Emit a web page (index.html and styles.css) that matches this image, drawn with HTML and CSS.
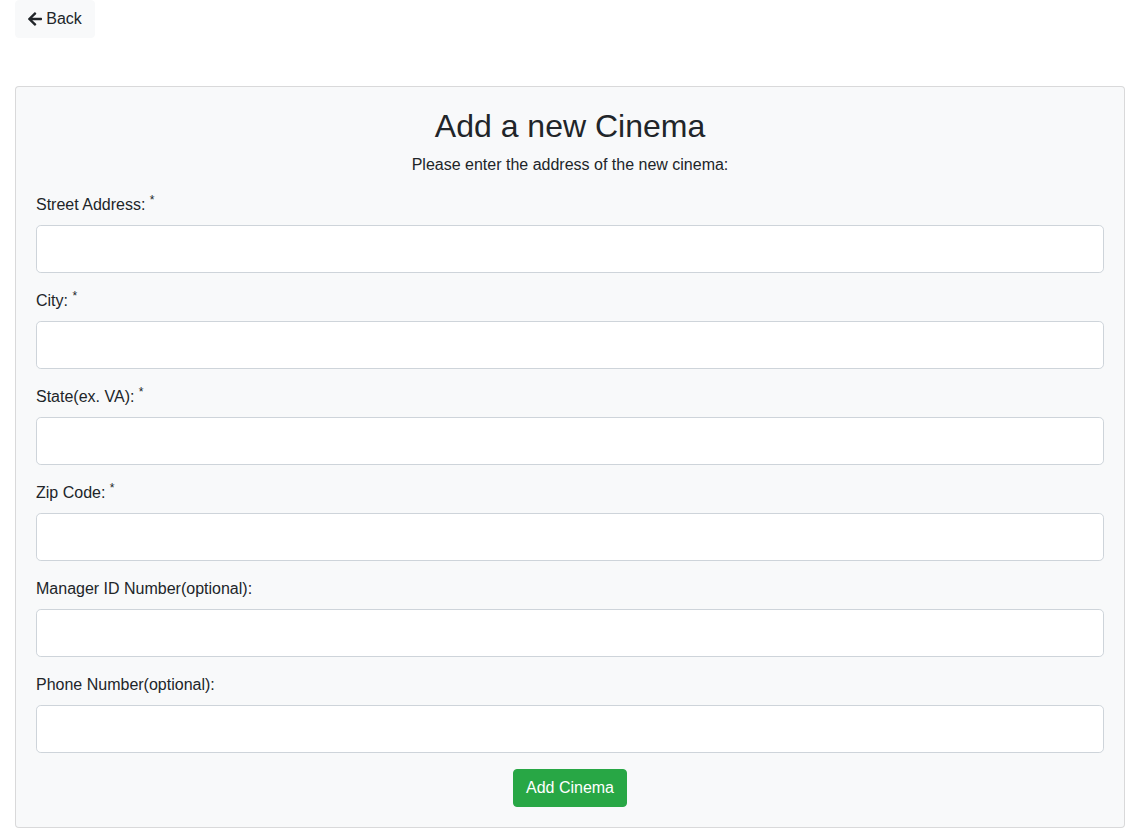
FILE: index.html
```html
<!DOCTYPE html>
<html>
<head>
<meta charset="utf-8">
<link rel="stylesheet" href="styles.css">
</head>
<body>
<div class="page">
  <div class="topbar">
    <button class="btn-back"><svg class="arrow" viewBox="0 0 448 512" width="14" height="16"><path fill="#212529" d="M257.5 445.1l-22.2 22.2c-9.4 9.4-24.6 9.4-33.9 0L7 273c-9.4-9.4-9.4-24.6 0-33.9L201.4 44.7c9.4-9.4 24.6-9.4 33.9 0l22.2 22.2c9.5 9.5 9.3 25-.4 34.3L136.6 216H424c13.3 0 24 10.7 24 24v32c0 13.3-10.7 24-24 24H136.6l120.5 114.8c9.8 9.3 10 24.8.4 34.3z"/></svg> Back</button>
  </div>
  <div class="card">
    <h2 class="title">Add a new Cinema</h2>
    <p class="subtitle">Please enter the address of the new cinema:</p>
    <form class="form">
      <div class="group">
        <label class="label">Street Address: <sup>*</sup></label>
        <input class="input" type="text">
      </div>
      <div class="group">
        <label class="label">City: <sup>*</sup></label>
        <input class="input" type="text">
      </div>
      <div class="group">
        <label class="label">State(ex. VA): <sup>*</sup></label>
        <input class="input" type="text">
      </div>
      <div class="group">
        <label class="label">Zip Code: <sup>*</sup></label>
        <input class="input" type="text">
      </div>
      <div class="group">
        <label class="label">Manager ID Number(optional):</label>
        <input class="input" type="text">
      </div>
      <div class="group">
        <label class="label">Phone Number(optional):</label>
        <input class="input" type="text">
      </div>
      <div class="actions">
        <button class="btn-submit" type="button">Add Cinema</button>
      </div>
    </form>
  </div>
</div>
</body>
</html>
```

FILE: styles.css
```css
* { box-sizing: border-box; }
html, body { margin: 0; padding: 0; }
body {
  font-family: "Liberation Sans", Arial, sans-serif;
  font-size: 16px;
  line-height: 1.5;
  color: #212529;
  background: #fff;
}
.page { padding: 0 15px; }
.topbar { height: 86px; }
.btn-back {
  display: inline-flex;
  align-items: center;
  gap: 4px;
  height: 38px;
  width: 80px;
  justify-content: center;
  padding: 0 12px;
  font: inherit;
  color: #212529;
  background: #f8f9fa;
  border: 1px solid #f8f9fa;
  border-radius: 4px;
}
.arrow { display: block; }
.card {
  background: #f8f9fa;
  border: 1px solid rgba(0,0,0,.125);
  border-radius: 4px;
  padding: 20px;
}
.title {
  margin: 0 0 8px;
  font-size: 32px;
  font-weight: 400;
  line-height: 1.2;
  text-align: center;
}
.subtitle {
  margin: 0 0 16px;
  text-align: center;
}
.form { margin: 0; }
.group { margin-bottom: 16px; }
.label {
  display: block;
  margin-bottom: 8px;
}
.label sup {
  font-size: 75%;
  line-height: 0;
  position: relative;
  top: -0.5em;
  vertical-align: baseline;
}
.input {
  display: block;
  width: 100%;
  height: 48px;
  padding: 8px 16px;
  font: inherit;
  font-size: 20px;
  background: #fff;
  border: 1px solid #ced4da;
  border-radius: 4.8px;
}
.actions { text-align: center; }
.btn-submit {
  height: 38px;
  padding: 0 12px;
  font: inherit;
  color: #fff;
  background: #28a745;
  border: 1px solid #28a745;
  border-radius: 4px;
}
```
